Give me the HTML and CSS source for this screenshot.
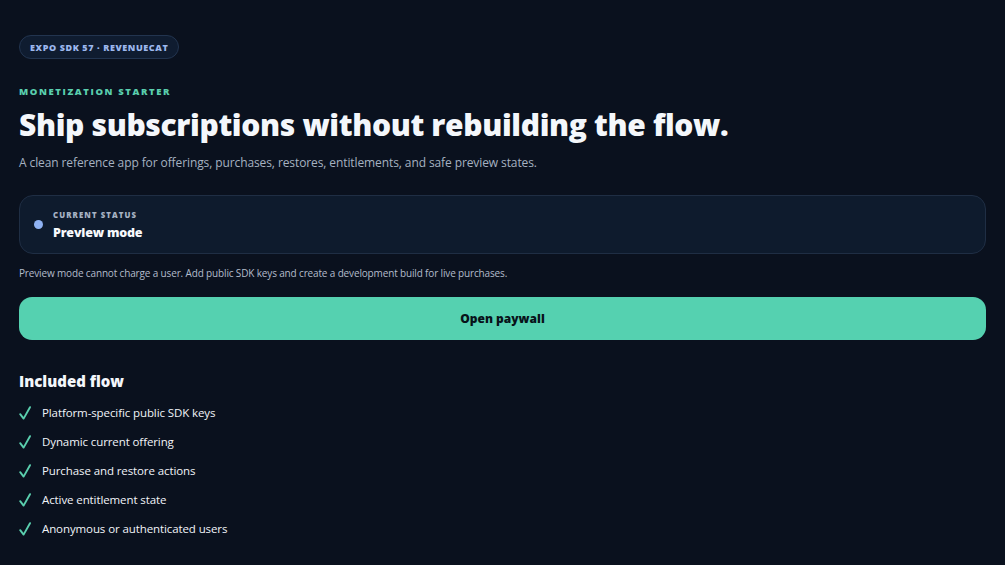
FILE: index.html
```html
<!DOCTYPE html>
<html lang="en">
<head>
<meta charset="utf-8">
<link rel="stylesheet" href="styles.css">
</head>
<body>
<main class="page">
  <div class="pill">EXPO SDK 57 · REVENUECAT</div>
  <div class="eyebrow">MONETIZATION STARTER</div>
  <h1 class="title">Ship subscriptions without rebuilding the flow.</h1>
  <p class="subtitle">A clean reference app for offerings, purchases, restores, entitlements, and safe preview states.</p>
  <section class="status">
    <span class="dot"></span>
    <div class="status-text">
      <div class="status-label">CURRENT STATUS</div>
      <div class="status-value">Preview mode</div>
    </div>
  </section>
  <p class="note">Preview mode cannot charge a user. Add public SDK keys and create a development build for live purchases.</p>
  <button class="cta">Open paywall</button>
  <h2 class="section-title">Included flow</h2>
  <ul class="list">
    <li><svg class="check" viewBox="0 0 12 14" width="12" height="14"><path d="M1.2 8.2 L4.6 12.6 L11 1.2" /></svg>Platform-specific public SDK keys</li>
    <li><svg class="check" viewBox="0 0 12 14" width="12" height="14"><path d="M1.2 8.2 L4.6 12.6 L11 1.2" /></svg>Dynamic current offering</li>
    <li><svg class="check" viewBox="0 0 12 14" width="12" height="14"><path d="M1.2 8.2 L4.6 12.6 L11 1.2" /></svg>Purchase and restore actions</li>
    <li><svg class="check" viewBox="0 0 12 14" width="12" height="14"><path d="M1.2 8.2 L4.6 12.6 L11 1.2" /></svg>Active entitlement state</li>
    <li><svg class="check" viewBox="0 0 12 14" width="12" height="14"><path d="M1.2 8.2 L4.6 12.6 L11 1.2" /></svg>Anonymous or authenticated users</li>
  </ul>
</main>
</body>
</html>
```

FILE: styles.css
```css
* { box-sizing: border-box; }
html, body { margin: 0; padding: 0; }
body {
  background: #0a111e;
  color: #f3f6fb;
  font-family: "Open Sans", "Noto Sans", sans-serif;
  height: 565px;
  overflow: hidden;
}
.page {
  padding: 35px 19px 0 19px;
  display: flex;
  flex-direction: column;
  align-items: flex-start;
}
.pill {
  height: 24px;
  padding: 0 10px;
  display: flex;
  align-items: center;
  border-radius: 12px;
  border: 1px solid #22344f;
  background: #0f1c30;
  color: #9cb8ee;
  font-size: 9px;
  font-weight: 800;
  letter-spacing: 0.6px;
}
.eyebrow {
  margin-top: 27px;
  color: #5acfae;
  font-size: 9.5px;
  font-weight: 800;
  letter-spacing: 1.6px;
  line-height: 12px;
}
.title {
  margin: 7px 0 0 0;
  font-size: 30px;
  font-weight: 800;
  line-height: 40px;
  letter-spacing: -0.35px;
  color: #f4f7fb;
}
.subtitle {
  margin: 9px 0 0 0;
  font-size: 12px;
  line-height: 18px;
  letter-spacing: -0.1px;
  color: #a6b1c1;
}
.status {
  margin-top: 23px;
  width: 100%;
  height: 59px;
  border-radius: 14px;
  border: 1px solid #1f2e44;
  background: #0e1b2d;
  display: flex;
  align-items: center;
  padding-left: 14px;
  gap: 10px;
}
.dot {
  width: 9px;
  height: 9px;
  border-radius: 50%;
  background: #8fb2f2;
}
.status-text {
  padding-top: 3px;
}
.status-label {
  font-size: 7.8px;
  font-weight: 800;
  letter-spacing: 1.1px;
  color: #a7b3c4;
  line-height: 11px;
}
.status-value {
  margin-top: 3px;
  font-size: 12.5px;
  font-weight: 800;
  letter-spacing: -0.2px;
  color: #f7f9fc;
  line-height: 18px;
}
.note {
  margin: 12px 0 0 0;
  font-size: 10px;
  line-height: 14px;
  letter-spacing: -0.15px;
  color: #b3bccb;
}
.cta {
  margin-top: 17px;
  width: 100%;
  height: 43px;
  border: none;
  border-radius: 13px;
  background: #55d1b0;
  color: #08131a;
  font-family: inherit;
  font-size: 12px;
  font-weight: 800;
}
.section-title {
  margin: 31px 0 0 0;
  font-size: 15px;
  font-weight: 800;
  line-height: 20px;
  color: #f4f7fb;
}
.list {
  list-style: none;
  margin: 13px 0 0 0;
  padding: 0;
  display: flex;
  flex-direction: column;
  gap: 11px;
}
.list li {
  display: flex;
  align-items: center;
  font-size: 11.5px;
  line-height: 18px;
  letter-spacing: -0.1px;
  color: #f1f4f9;
}
.check {
  margin-right: 11px;
  fill: none;
  stroke: #5acfae;
  stroke-width: 1.9;
  stroke-linecap: round;
  stroke-linejoin: round;
}
```
